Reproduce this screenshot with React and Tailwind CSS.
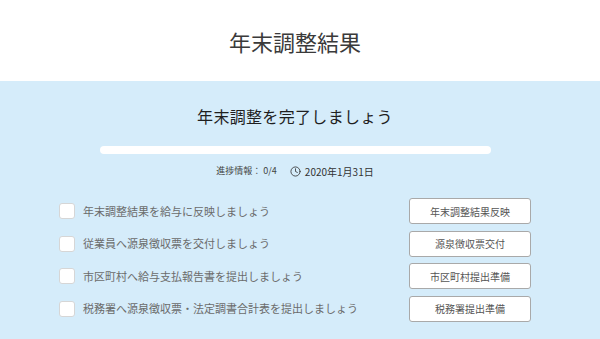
import { Clock } from "lucide-react";

const tasks = [
  { label: "年末調整結果を給与に反映しましょう", action: "年末調整結果反映" },
  { label: "従業員へ源泉徴収票を交付しましょう", action: "源泉徴収票交付" },
  { label: "市区町村へ給与支払報告書を提出しましょう", action: "市区町村提出準備" },
  { label: "税務署へ源泉徴収票・法定調書合計表を提出しましょう", action: "税務署提出準備" },
];

function TaskRow({ label, action }) {
  return (
    <div className="flex items-center justify-between h-[26px]">
      <label className="flex items-center gap-2">
        <span className="w-4 h-4 bg-white border border-[#d6d6d6] rounded-[3px]" />
        <span className="text-[11px] text-[#6b6b6b]">{label}</span>
      </label>
      <button className="w-[122px] h-[26px] bg-white border border-[#a9a9a9] rounded-[3px] text-[10px] text-[#555]">
        {action}
      </button>
    </div>
  );
}

export default function App() {
  return (
    <div
      className="w-[600px] h-[339px] overflow-hidden"
      style={{ fontFamily: '"Noto Sans CJK JP", "Noto Sans", sans-serif' }}
    >
      <header className="h-[81px] bg-white flex items-center justify-center pr-[10px]">
        <h1 className="text-[22px] text-[#3a3a3a] leading-none">年末調整結果</h1>
      </header>

      <section className="bg-[#d5ecfa] h-[258px] pr-[10px] pt-[23px]">
        <h2 className="text-center text-[16px] leading-6 text-[#1f1f1f] tracking-[0.02em]">
          年末調整を完了しましょう
        </h2>

        <div className="mt-[18px] mx-auto w-[391px] h-2 rounded-full bg-white" />

        <div className="mt-[9px] h-4 flex items-center justify-center text-[#444]">
          <span className="text-[9px]">進捗情報： 0/4</span>
          <Clock size={11} strokeWidth={1.8} className="ml-[13px] mr-1 text-[#333]" />
          <span className="text-[10px] text-[#333]">2020年1月31日</span>
        </div>

        <div className="mt-[19px] mx-auto w-[472px] flex flex-col gap-[6.5px]">
          {tasks.map((t) => (
            <TaskRow key={t.action} {...t} />
          ))}
        </div>
      </section>
    </div>
  );
}
